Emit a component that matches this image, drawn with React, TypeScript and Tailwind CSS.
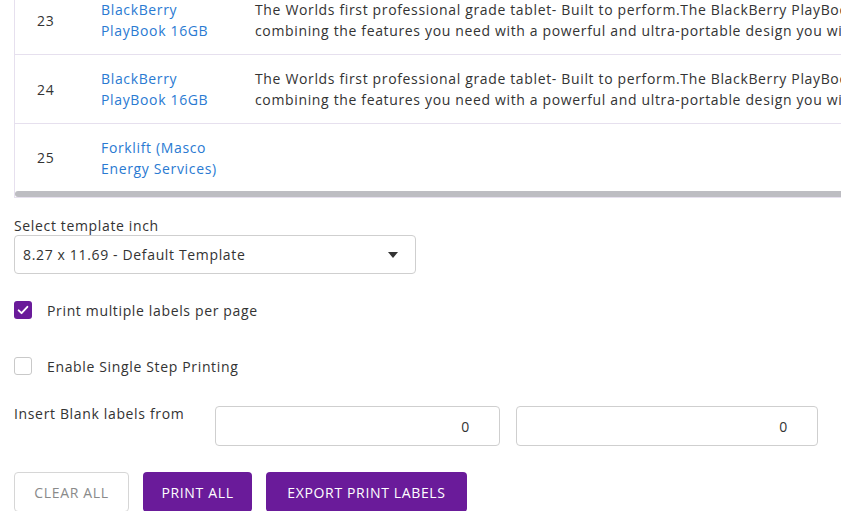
const rows = [
  {
    id: 23,
    name: ['BlackBerry', 'PlayBook 16GB'],
    desc: [
      'The Worlds first professional grade tablet- Built to perform.The BlackBerry PlayBook is the tablet that delivers,',
      'combining the features you need with a powerful and ultra-portable design you will love.',
    ],
  },
  {
    id: 24,
    name: ['BlackBerry', 'PlayBook 16GB'],
    desc: [
      'The Worlds first professional grade tablet- Built to perform.The BlackBerry PlayBook is the tablet that delivers,',
      'combining the features you need with a powerful and ultra-portable design you will love.',
    ],
  },
  {
    id: 25,
    name: ['Forklift (Masco', 'Energy Services)'],
    desc: [],
  },
]

function Checkbox({ checked }: { checked: boolean }) {
  return checked ? (
    <span className="w-[18px] h-[18px] rounded-[3px] bg-[#6a1b9a] flex items-center justify-center">
      <svg viewBox="0 0 24 24" className="w-[14px] h-[14px]" fill="none" stroke="white" strokeWidth="3.2" strokeLinecap="round" strokeLinejoin="round">
        <path d="M4.5 12.5l5 5 10-11" />
      </svg>
    </span>
  ) : (
    <span className="w-[18px] h-[18px] rounded-[3px] border border-[#c9c9c9] bg-white" />
  )
}

export default function App() {
  return (
    <div className="w-[841px] h-[511px] overflow-hidden bg-white text-[14px] tracking-[0.65px] text-[#333] font-['Open_Sans',sans-serif]">
      {/* Table */}
      <div className="ml-[14px] -mt-[14px] border-l border-b border-[#e6e0ee] overflow-hidden">
        <div className="w-[1400px]">
          {rows.map((r, i) => (
            <div
              key={r.id}
              className={`flex items-center leading-[21px] ${i < rows.length - 1 ? 'h-[69px] border-b border-[#e6e0ee]' : 'h-[67px]'}`}
            >
              <div className="w-[86px] pl-[22px]">{r.id}</div>
              <div className="w-[154px] text-[#2a7ad2]">
                {r.name.map(n => (
                  <div key={n}>{n}</div>
                ))}
              </div>
              <div className="whitespace-nowrap">
                {r.desc.map(d => (
                  <div key={d}>{d}</div>
                ))}
              </div>
            </div>
          ))}
          <div className="h-[6px] bg-[#bdbdc2] rounded-full w-[1390px]" />
        </div>
      </div>

      {/* Form */}
      <div className="px-[14px] pt-[18px]">
        <div className="leading-[20px]">Select template inch</div>
        <div className="mt-[-1px] w-[402px] h-[39px] border border-[#cfcfcf] rounded-[4px] flex items-center justify-between pl-[8px] pr-[17px]">
          <span>8.27 x 11.69 - Default Template</span>
          <svg viewBox="0 0 10 6" className="w-[10px] h-[6px]">
            <path d="M0 0h10L5 6z" fill="#333" />
          </svg>
        </div>

        <div className="mt-[26px] flex items-center gap-[15px] h-[20px]">
          <Checkbox checked />
          <span>Print multiple labels per page</span>
        </div>

        <div className="mt-[36px] flex items-center gap-[15px] h-[20px]">
          <Checkbox checked={false} />
          <span>Enable Single Step Printing</span>
        </div>

        <div className="mt-[30px] flex items-start">
          <div className="w-[201px] leading-[16px]">Insert Blank labels from</div>
          <div className="w-[285px] h-[40px] border border-[#cfcfcf] rounded-[4px] flex items-center justify-end pr-[29px]">0</div>
          <div className="ml-[16px] w-[302px] h-[40px] border border-[#cfcfcf] rounded-[4px] flex items-center justify-end pr-[29px]">0</div>
        </div>

        <div className="mt-[26px] flex gap-[14px]">
          <button className="w-[115px] h-[40px] border border-[#d6d6d6] rounded-[4px] text-[#8a8a8a] bg-white">CLEAR ALL</button>
          <button className="w-[109px] h-[40px] rounded-[4px] bg-[#6a1b9a] text-white">PRINT ALL</button>
          <button className="w-[201px] h-[40px] rounded-[4px] bg-[#6a1b9a] text-white">EXPORT PRINT LABELS</button>
        </div>
      </div>
    </div>
  )
}
